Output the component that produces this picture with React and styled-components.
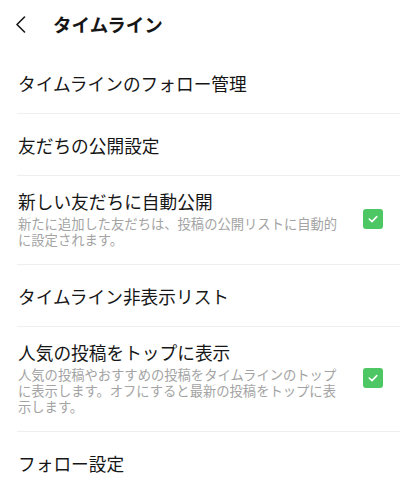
import React from 'react'
import styled, { createGlobalStyle } from 'styled-components'

const GlobalStyle = createGlobalStyle`
  html, body {
    margin: 0;
    padding: 0;
    background: #fff;
  }

  body {
    font-family: "Noto Sans CJK JP", "Noto Sans", sans-serif;
    color: #161616;
  }
`

const Page = styled.div`
  width: 400px;
  height: 493px;
  overflow: hidden;
  background: #fff;
`

const Header = styled.header`
  display: flex;
  align-items: center;
  height: 52px;
  padding-left: 14px;
  box-sizing: border-box;
`

const BackButton = styled.button`
  display: flex;
  align-items: center;
  justify-content: center;
  width: 12px;
  height: 20px;
  padding: 0;
  margin: -4px 27px 0 0;
  border: none;
  background: none;
  color: #161616;
`

const Title = styled.h1`
  margin: -4px 0 0;
  font-size: 18.5px;
  font-weight: 700;
  line-height: 24px;
`

const List = styled.ul`
  list-style: none;
  margin: 0;
  padding: 0 0 0 17px;
`

const Item = styled.li`
  display: flex;
  align-items: center;
  gap: 20px;
  min-height: ${p => (p.$tall ? 'auto' : '61px')};
  padding: ${p => (p.$tall ? '14px 17px 16px 1px' : '0 17px 0 1px')};
  border-bottom: 1px solid #efefef;
`

const Texts = styled.div`
  flex: 1;
  display: flex;
  flex-direction: column;
`

const Label = styled.span`
  font-size: 17.7px;
  line-height: 22px;
`

const Note = styled.span`
  margin-top: 4px;
  font-size: 13.3px;
  line-height: 16px;
  color: #a3a3a3;
`

const Check = styled.span`
  flex: none;
  display: flex;
  align-items: center;
  justify-content: center;
  width: 20px;
  height: 20px;
  border-radius: 3px;
  background: #4cc764;
`

const items = [
  { label: 'タイムラインのフォロー管理' },
  { label: '友だちの公開設定' },
  {
    label: '新しい友だちに自動公開',
    note: '新たに追加した友だちは、投稿の公開リストに自動的に設定されます。',
    checked: true,
  },
  { label: 'タイムライン非表示リスト' },
  {
    label: '人気の投稿をトップに表示',
    note: '人気の投稿やおすすめの投稿をタイムラインのトップに表示します。オフにすると最新の投稿をトップに表示します。',
    checked: true,
  },
  { label: 'フォロー設定' },
]

const Chevron = () => (
  <svg width="11" height="17" viewBox="0 0 11 17" fill="none">
    <path d="M9.5 1 L2 8.5 L9.5 16" stroke="currentColor" strokeWidth="1.6" strokeLinecap="round" strokeLinejoin="round" />
  </svg>
)

const Tick = () => (
  <svg width="10" height="8" viewBox="0 0 10 8" fill="none">
    <path d="M1.2 4 L4 6.6 L8.8 1.6" stroke="#fff" strokeWidth="1.6" strokeLinecap="round" strokeLinejoin="round" />
  </svg>
)

export default function App() {
  return (
    <Page>
      <GlobalStyle />
      <Header>
        <BackButton aria-label="戻る">
          <Chevron />
        </BackButton>
        <Title>タイムライン</Title>
      </Header>

      <List>
        {items.map(item => (
          <Item key={item.label} $tall={!!item.note}>
            <Texts>
              <Label>{item.label}</Label>
              {item.note && <Note>{item.note}</Note>}
            </Texts>
            {item.checked && (
              <Check>
                <Tick />
              </Check>
            )}
          </Item>
        ))}
      </List>
    </Page>
  )
}
